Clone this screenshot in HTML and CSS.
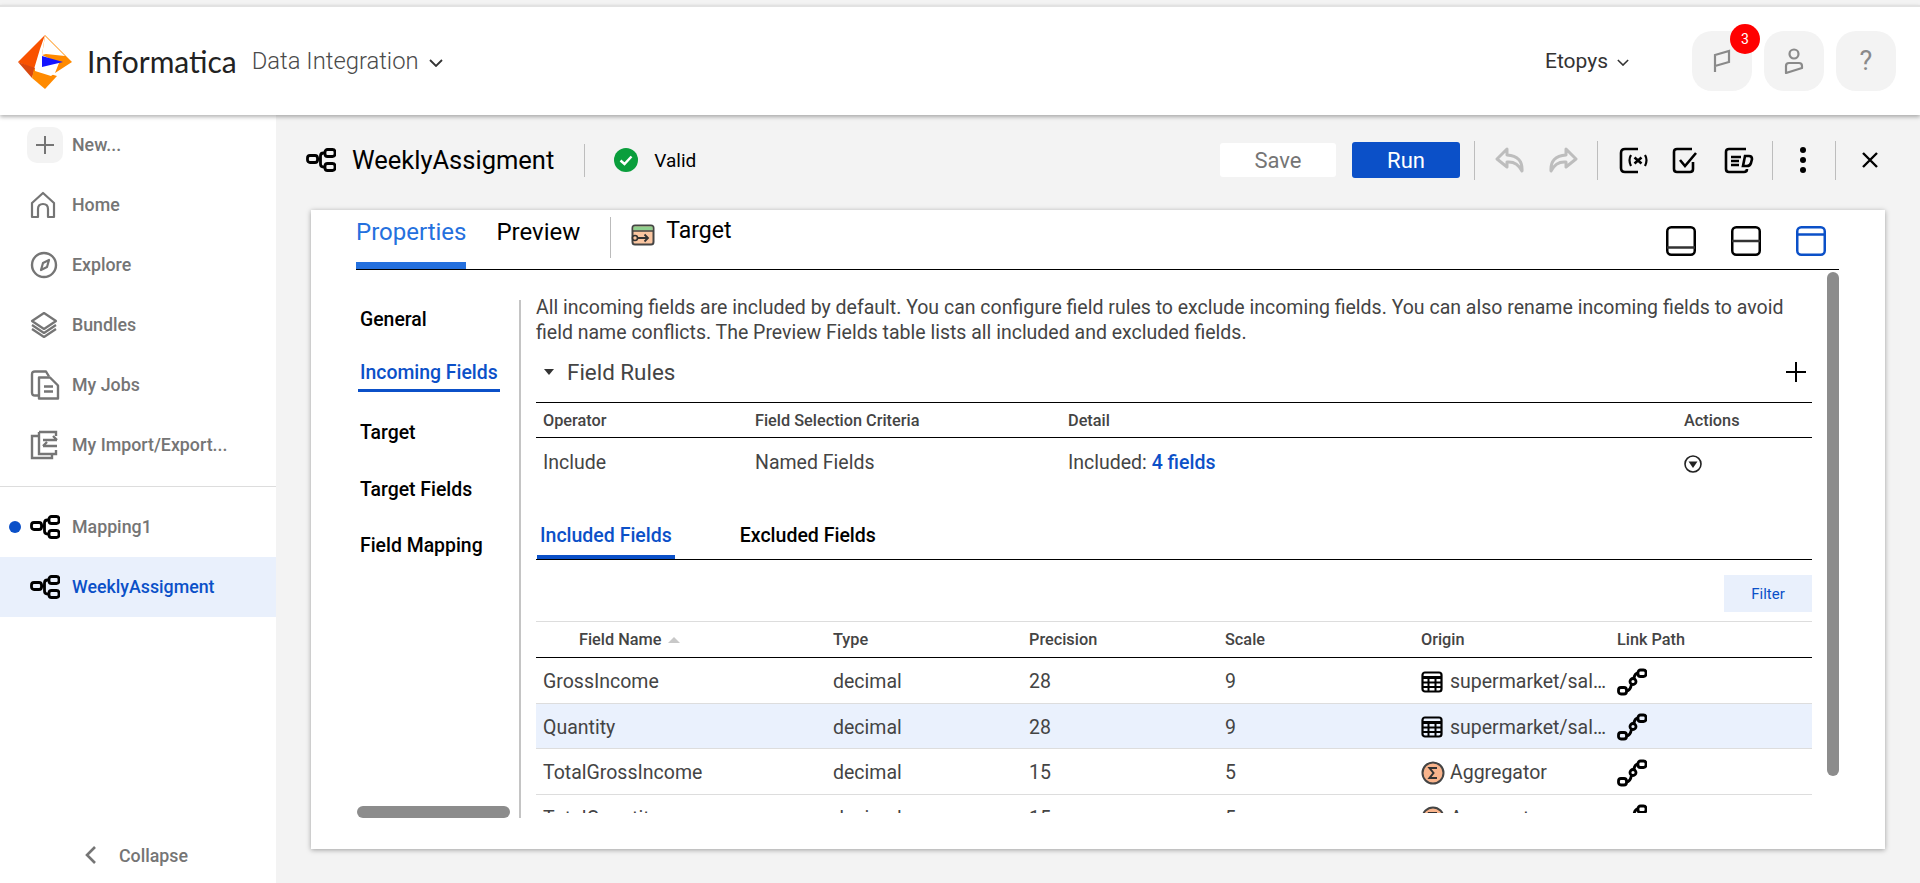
FILE: index.html
```html
<!DOCTYPE html>
<html lang="en">

    <head>
        <meta charset="UTF-8">
        <title>WeeklyAssigment - Data Integration</title>
        <link rel="stylesheet" href="styles.css">
    </head>

    <body>
        <!-- shared icons -->
        <svg class="defs" width="0" height="0">
            <symbol id="i-map" viewBox="0 0 30 24">
                <g fill="none" stroke="currentColor" stroke-width="2.800">
                    <rect x="1.500" y="7.500" width="10" height="7" rx="2.500"/>
                    <rect x="19" y="1.500" width="10" height="7" rx="2.500"/>
                    <rect x="19" y="15.500" width="10" height="7" rx="2.500"/>
                    <path d="M11.500 11h3M19 5h-1.500q-3 0-3 3v8q0 3 3 3h1.500"/>
                </g>
            </symbol>
            <symbol id="i-link" viewBox="0 0 30 28">
                <g fill="none" stroke="#000" stroke-width="2.800">
                    <rect x="1.500" y="19.500" width="8" height="6.500" rx="2.500"/>
                    <rect x="21" y="2" width="8" height="6.500" rx="2.500"/>
                    <circle cx="16" cy="13.500" r="3"/>
                    <path d="M9.500 23q4-.5 5-7M17 10.500q.5-5 4-5.500"/>
                </g>
            </symbol>
            <symbol id="i-grid" viewBox="0 0 22 22">
                <rect x="1.500" y="1.500" width="19" height="19" rx="2.500" fill="none" stroke="#000" stroke-width="2.200"/>
                <path d="M1.500 6.500h19" stroke="#000" stroke-width="3"/>
                <path d="M1.500 11.500h19M1.500 16h19M7.500 6v14M14.500 6v14" stroke="#000" stroke-width="2"/>
            </symbol>
            <symbol id="i-sum" viewBox="0 0 24 24">
                <circle cx="12" cy="12" r="10.500" fill="#f9b48c" stroke="#444" stroke-width="2"/>
                <path d="M16 7H8.500l4 5-4 5H16" fill="none" stroke="#333" stroke-width="2"/>
            </symbol>
        </svg>

        <header class="topbar">
            <div class="brand">
                <svg class="logo" width="54" height="55" viewBox="0 0 54 55">
                    <polygon points="0,28 27,1 22,15 16,35" fill="#f95200"/>
                    <polygon points="0,28 17,34 14,44" fill="#d9480f"/>
                    <polygon points="27,1 54,28 37,39 41,29 24,21" fill="#ff8a00"/>
                    <polygon points="27,2 47,22 28,20 24,21" fill="#fff"/>
                    <polygon points="16,35 39,42 27,55 14,44" fill="#ff8a00"/>
                    <polygon points="17,33 37,39 33,42 17,37" fill="#fff"/>
                    <polygon points="24,22 45,28 24,33" fill="#1414ff"/>
                </svg>
                <span class="wordmark">Informatica</span>
                <span class="product">Data Integration</span>
                <svg class="chev" width="14" height="8" viewBox="0 0 14 8"><path d="M1 1l6 6 6-6" fill="none" stroke="#333" stroke-width="1.800"/></svg>
            </div>
            <div class="org">
                <span>Etopys</span>
                <svg class="chev" width="12" height="7" viewBox="0 0 14 8"><path d="M1 1l6 6 6-6" fill="none" stroke="#333" stroke-width="1.800"/></svg>
            </div>
            <div class="tools">
                <div class="tool">
                    <svg width="18" height="24" viewBox="0 0 18 24"><path d="M2 23V6l14-4v11L2 17" fill="none" stroke="#8a8a8a" stroke-width="2.200"/></svg>
                    <span class="badge">3</span>
                </div>
                <div class="tool">
                    <svg width="20" height="26" viewBox="0 0 20 26"><g fill="none" stroke="#8a8a8a" stroke-width="2.200" stroke-linejoin="round"><circle cx="10" cy="6" r="4.500"/><path d="M2 25v-7q0-3 3-3h10q3 0 3 3v2z"/></g></svg>
                </div>
                <div class="tool tool-q">?</div>
            </div>
        </header>

        <div class="layout">
            <nav class="side">
                <div class="side-item">
                    <span class="plus">
                        <svg width="20" height="20" viewBox="0 0 20 20"><path d="M10 1v18M1 10h18" stroke="#757575" stroke-width="2"/></svg>
                    </span>
                    <span>New...</span>
                </div>
                <div class="side-item">
                    <svg class="side-icon" width="26" height="28" viewBox="0 0 26 28"><path d="M2 26V12L13 2l11 10v14h-6v-8q0-5-5-5t-5 5v8z" fill="none" stroke="#757575" stroke-width="2.200" stroke-linejoin="round"/></svg>
                    <span>Home</span>
                </div>
                <div class="side-item">
                    <svg class="side-icon" width="28" height="28" viewBox="0 0 28 28"><circle cx="14" cy="14" r="12" fill="none" stroke="#757575" stroke-width="2.400"/><path d="M19 9l-2 7-6 3 2-7z" fill="none" stroke="#757575" stroke-width="2.200" stroke-linejoin="round"/></svg>
                    <span>Explore</span>
                </div>
                <div class="side-item">
                    <svg class="side-icon" width="28" height="28" viewBox="0 0 28 28"><g fill="none" stroke="#757575" stroke-width="2.200" stroke-linejoin="round"><path d="M14 2L2 10l12 8 12-8z"/><path d="M2 14l12 8 12-8"/><path d="M2 18l12 8 12-8"/></g></svg>
                    <span>Bundles</span>
                </div>
                <div class="side-item">
                    <svg class="side-icon" width="30" height="31" viewBox="0 0 30 31"><g fill="none" stroke="#757575" stroke-width="2.400" stroke-linejoin="round"><path d="M8 26H5q-3 0-3-3V5q0-3 3-3h11l3 5"/><path d="M9 8h11l8 8v13H9z"/><path d="M14 17h9M14 22h9"/></g></svg>
                    <span>My Jobs</span>
                </div>
                <div class="side-item">
                    <svg class="side-icon" width="30" height="30" viewBox="0 0 30 30"><g fill="none" stroke="#757575" stroke-width="2.400"><path d="M9 6H2v22h20v-4"/><path d="M9 2h17v4M9 2v22h17v-4"/><path d="M13 10h14M23 6l4 4M27 16H13M17 12l-4 4"/></g></svg>
                    <span>My Import/Export...</span>
                </div>
                <div class="side-sep"></div>
                <div class="side-item side-open">
                    <span class="dot"></span>
                    <svg class="side-icon map" width="30" height="24"><use href="#i-map"/></svg>
                    <span>Mapping1</span>
                </div>
                <div class="side-item side-open side-active">
                    <svg class="side-icon map" width="30" height="24"><use href="#i-map"/></svg>
                    <span>WeeklyAssigment</span>
                </div>
                <div class="collapse">
                    <svg width="12" height="18" viewBox="0 0 12 18"><path d="M10 1L2 9l8 8" fill="none" stroke="#757575" stroke-width="2.600"/></svg>
                    <span>Collapse</span>
                </div>
            </nav>

            <main class="main">
                <div class="titlebar">
                    <svg class="map" width="30" height="24"><use href="#i-map"/></svg>
                    <h1 class="title">WeeklyAssigment</h1>
                    <span class="vline"></span>
                    <span class="status">
                        <svg width="24" height="24" viewBox="0 0 24 24"><circle cx="12" cy="12" r="12" fill="#0a9e3c"/><path d="M6.500 12.500l4 3.500 7-7.500" fill="none" stroke="#fff" stroke-width="2.400"/></svg>
                        <span>Valid</span>
                    </span>
                    <div class="actions">
                        <button class="btn btn-save">Save</button>
                        <button class="btn btn-run">Run</button>
                        <span class="vline vline-a"></span>
                        <svg class="act gap-20" width="30" height="27" viewBox="0 0 30 27"><path d="M12 2L2 12l10 8v-5q10-1 15 9 1-15-15-16z" fill="none" stroke="#bdbdbd" stroke-width="3" stroke-linejoin="round"/></svg>
                        <svg class="act gap-23" width="30" height="27" viewBox="0 0 30 27"><path d="M18 2l10 10-10 8v-5q-10-1-15 9-1-15 15-16z" fill="none" stroke="#bdbdbd" stroke-width="3" stroke-linejoin="round"/></svg>
                        <span class="vline vline-a gap-19"></span>
                        <svg class="act gap-21" width="30" height="27" viewBox="0 0 30 27"><g fill="none" stroke="#000" stroke-width="2.600"><path d="M19 2H6Q2 2 2 6v15q0 4 4 4h13"/><path d="M12 8q-3 5 0 11M26 8q3 5 0 11" stroke-width="2.200"/><path d="M15.500 10.500l7 6M22.500 10.500l-7 6"/></g></svg>
                        <svg class="act gap-23" width="26" height="27" viewBox="0 0 26 27"><g fill="none" stroke="#000" stroke-width="2.600"><path d="M20 2H5Q2 2 2 5v17q0 3 3 3h13q3 0 3-3v-7"/><path d="M8 13l5 6 11-13"/></g></svg>
                        <svg class="act gap-26" width="30" height="27" viewBox="0 0 30 27"><g fill="none" stroke="#000" stroke-width="2.600"><path d="M22 2H5Q2 2 2 5v17q0 3 3 3h15q3 0 3-3"/><path d="M7 10h10M7 14h8M7 18h8"/><path d="M21 9h4q3 0 3 3l-1 4q-1 3-4 3h-4z"/></g></svg>
                        <span class="vline vline-a gap-18"></span>
                        <span class="dots"><i></i><i></i><i></i></span>
                        <span class="vline vline-a gap-0"></span>
                        <svg class="act close" width="18" height="18" viewBox="0 0 18 18"><path d="M2 2l14 14M16 2L2 16" stroke="#000" stroke-width="2.400"/></svg>
                    </div>
                </div>

                <section class="card">
                    <div class="tabs">
                        <span class="tab tab-on">Properties</span>
                        <span class="tab">Preview</span>
                        <span class="tab-sep"></span>
                        <svg class="tgt" width="24" height="22" viewBox="0 0 24 22"><rect x="1.500" y="1.500" width="21" height="19" rx="2.500" fill="#fbc6a1" stroke="#444" stroke-width="2"/><path d="M2.500 2.500h19v4h-19z" fill="#8fd08f"/><path d="M2 7h20" stroke="#444" stroke-width="1.500"/><circle cx="4" cy="14" r="2.500" fill="#fbc6a1" stroke="#333" stroke-width="1.600"/><path d="M6.500 14H17M13.500 10.500L17 14l-3.500 3.500" fill="none" stroke="#333" stroke-width="1.800"/></svg>
                        <span class="tab-target">Target</span>
                        <div class="panes">
                            <svg width="30" height="30" viewBox="0 0 30 30"><rect x="1.250" y="1.250" width="27.500" height="27.500" rx="4" fill="none" stroke="#000" stroke-width="2.500"/><path d="M1 21.500h28" stroke="#333" stroke-width="2.500"/></svg>
                            <svg width="30" height="30" viewBox="0 0 30 30"><rect x="1.250" y="1.250" width="27.500" height="27.500" rx="4" fill="none" stroke="#000" stroke-width="2.500"/><path d="M1 15h28" stroke="#333" stroke-width="2.500"/></svg>
                            <svg width="30" height="30" viewBox="0 0 30 30"><rect x="1.250" y="1.250" width="27.500" height="27.500" rx="4" fill="none" stroke="#0b50c8" stroke-width="2.500"/><path d="M1 8.500h28" stroke="#0b50c8" stroke-width="2.500"/></svg>
                        </div>
                    </div>

                    <div class="props">
                        <ul class="prop-nav">
                            <li>General</li>
                            <li><span class="prop-on">Incoming Fields</span></li>
                            <li>Target</li>
                            <li>Target Fields</li>
                            <li>Field Mapping</li>
                        </ul>

                        <div class="prop-body">
                            <p class="intro">All incoming fields are included by default. You can configure field rules to exclude incoming fields. You can also rename incoming fields to avoid field name conflicts. The Preview Fields table lists all included and excluded fields.</p>

                            <div class="rules-head">
                                <span class="caret"></span>
                                <span class="rules-title">Field Rules</span>
                                <svg class="rules-add" width="22" height="22" viewBox="0 0 22 22"><path d="M11 1v20M1 11h20" stroke="#000" stroke-width="2"/></svg>
                            </div>

                            <div class="rules-row rules-th">
                                <span>Operator</span>
                                <span>Field Selection Criteria</span>
                                <span>Detail</span>
                                <span>Actions</span>
                            </div>
                            <div class="rules-row rules-td">
                                <span>Include</span>
                                <span>Named Fields</span>
                                <span>Included: <a class="link">4 fields</a></span>
                                <span>
                                    <svg class="rules-act" width="18" height="18" viewBox="0 0 18 18"><circle cx="9" cy="9" r="8" fill="none" stroke="#222" stroke-width="1.600"/><path d="M4.500 6.500h9L9 13z" fill="#222"/></svg>
                                </span>
                            </div>

                            <div class="subtabs">
                                <span class="subtab subtab-on">Included Fields</span>
                                <span class="subtab">Excluded Fields</span>
                            </div>

                            <div class="filter-row">
                                <button class="filter">Filter</button>
                            </div>

                            <div class="grid-head">
                                <span class="fname">Field Name <i class="sort"></i></span>
                                <span>Type</span>
                                <span>Precision</span>
                                <span>Scale</span>
                                <span>Origin</span>
                                <span>Link Path</span>
                            </div>
                            <div class="grid-body">
                                <div class="grid-row">
                                    <span>GrossIncome</span><span>decimal</span><span>28</span><span>9</span>
                                    <span class="origin"><svg width="22" height="22"><use href="#i-grid"/></svg><em>supermarket/sales</em></span>
                                    <svg class="lk" width="30" height="28"><use href="#i-link"/></svg>
                                </div>
                                <div class="grid-row grid-hl">
                                    <span>Quantity</span><span>decimal</span><span>28</span><span>9</span>
                                    <span class="origin"><svg width="22" height="22"><use href="#i-grid"/></svg><em>supermarket/sales</em></span>
                                    <svg class="lk" width="30" height="28"><use href="#i-link"/></svg>
                                </div>
                                <div class="grid-row">
                                    <span>TotalGrossIncome</span><span>decimal</span><span>15</span><span>5</span>
                                    <span class="origin origin-sum"><svg width="24" height="24"><use href="#i-sum"/></svg><em>Aggregator</em></span>
                                    <svg class="lk" width="30" height="28"><use href="#i-link"/></svg>
                                </div>
                                <div class="grid-row">
                                    <span>TotalQuantity</span><span>decimal</span><span>15</span><span>5</span>
                                    <span class="origin origin-sum"><svg width="24" height="24"><use href="#i-sum"/></svg><em>Aggregator</em></span>
                                    <svg class="lk" width="30" height="28"><use href="#i-link"/></svg>
                                </div>
                            </div>
                        </div>
                    </div>

                    <!-- scrollbars lie over the content -->
                    <span class="bar-v"></span>
                    <span class="bar-h"></span>
                </section>
            </main>
        </div>
    </body>

</html>
```

FILE: styles.css
```css
* {
    margin: 0;
    padding: 0;
    box-sizing: border-box;
    list-style: none;
}

html,
body {
    height: 883px;
    overflow: hidden;
}

body {
    display: flex;
    flex-direction: column;
    background: #f3f3f3;
    font-family: Roboto, "Liberation Sans", sans-serif;
    color: #000;
}

.defs {
    display: block;
    height: 0;
}

button {
    border: 0;
    font-family: inherit;
}

/* top bar */
.topbar {
    position: relative;
    z-index: 2;
    flex: none;
    height: 110px;
    margin-top: 5px;
    display: flex;
    align-items: center;
    padding: 0 24px 0 18px;
    background: #fff;
    border-top: 2px solid #e2e2e2;
    box-shadow: 0 2px 4px rgba(0, 0, 0, 0.3);
}

.brand {
    display: flex;
    align-items: center;
}

.wordmark {
    margin-left: 15px;
    font-family: Lato, Roboto, sans-serif;
    font-size: 30px;
    color: #222;
}

.product {
    margin-left: 15px;
    font-size: 23.800px;
    font-weight: 300;
    color: #4a4a4a;
}

.brand .chev {
    margin-left: 10px;
    margin-top: 3px;
}

.org {
    margin-left: auto;
    display: flex;
    align-items: center;
    gap: 9px;
    font-size: 21px;
    color: #333;
}

.org .chev {
    margin-top: 2px;
}

.tools {
    display: flex;
    gap: 12px;
    margin-left: 63px;
}

.tool {
    position: relative;
    width: 60px;
    height: 60px;
    display: flex;
    align-items: center;
    justify-content: center;
    border-radius: 20px;
    background: #f3f3f3;
}

.tool-q {
    font-size: 27px;
    color: #8a8a8a;
}

.badge {
    position: absolute;
    top: -7px;
    right: -8px;
    width: 30px;
    height: 30px;
    border-radius: 50%;
    background: #f00;
    color: #fff;
    font-size: 14px;
    line-height: 30px;
    text-align: center;
}

.layout {
    flex: 1;
    display: flex;
    min-height: 0;
}

/* left menu */
.side {
    flex: none;
    width: 276px;
    display: flex;
    flex-direction: column;
    background: #fff;
}

.side-item {
    height: 60px;
    display: flex;
    align-items: center;
    padding: 0 0 2px 72px;
    position: relative;
    font-size: 17.800px;
    font-weight: 500;
    color: #757575;
}

.plus {
    position: absolute;
    left: 27px;
    top: 12px;
    width: 36px;
    height: 36px;
    display: flex;
    align-items: center;
    justify-content: center;
    border-radius: 10px;
    background: #f3f3f3;
}

.side-icon {
    position: absolute;
    left: 30px;
    top: 50%;
    transform: translateY(-50%);
}

.map {
    color: #000;
}

.side-sep {
    height: 1px;
    margin: 11px 0 10px;
    background: #ddd;
}

.side-active {
    background: #e9f0fc;
    color: #0b50c8;
}

.dot {
    position: absolute;
    left: 9px;
    top: 24px;
    width: 12px;
    height: 12px;
    border-radius: 50%;
    background: #0b50c8;
}

.collapse {
    margin-top: auto;
    height: 56px;
    display: flex;
    align-items: center;
    padding-left: 85px;
    gap: 22px;
    font-size: 17.800px;
    font-weight: 500;
    color: #757575;
}

/* work area */
.main {
    flex: 1;
    min-width: 0;
    display: flex;
    flex-direction: column;
    padding: 0 35px 34px;
}

.titlebar {
    flex: none;
    height: 95px;
    display: flex;
    align-items: center;
    padding-bottom: 5px;
    margin-left: -5px;
}

.title {
    margin-left: 16px;
    font-size: 25.500px;
    font-weight: 400;
}

.vline {
    width: 1px;
    height: 33px;
    margin-left: 30px;
    background: #bdbdbd;
}

.status {
    display: flex;
    align-items: center;
    gap: 16px;
    margin-left: 29px;
    font-size: 19px;
}

.actions {
    margin-left: auto;
    display: flex;
    align-items: center;
    margin-right: 6px;
}

.btn {
    height: 34px;
    border-radius: 3px;
    font-size: 22px;
}

.btn-save {
    width: 116px;
    background: #fff;
    color: #757575;
}

.btn-run {
    width: 108px;
    height: 36px;
    margin-left: 16px;
    background: #0b50c8;
    color: #fff;
}

.vline-a {
    height: 39px;
    margin-left: 14px;
}

.gap-0 {
    margin-left: 0;
}

.gap-18 {
    margin-left: 18px;
}

.gap-19 {
    margin-left: 19px;
}

.gap-20 {
    margin-left: 20px;
}

.gap-21 {
    margin-left: 21px;
}

.gap-23 {
    margin-left: 23px;
}

.gap-26 {
    margin-left: 26px;
}

.dots {
    display: flex;
    flex-direction: column;
    gap: 4px;
    margin: 0 29px 0 27px;
}

.dots i {
    width: 6px;
    height: 6px;
    border-radius: 50%;
    background: #000;
}

.close {
    margin-left: 25px;
}

.card {
    position: relative;
    flex: 1;
    min-height: 0;
    display: flex;
    flex-direction: column;
    padding: 0 46px 31px 45px;
    background: #fff;
    box-shadow: 0 1px 5px rgba(0, 0, 0, 0.35);
}

.tabs {
    flex: none;
    height: 60px;
    display: flex;
    border-bottom: 1px solid #000;
}

.tab {
    height: 59px;
    padding-top: 7px;
    margin-right: 30px;
    font-size: 24px;
    line-height: 30px;
}

.tab-on {
    border-bottom: 7px solid #2470de;
    color: #2470de;
}

.tab-sep {
    width: 1px;
    height: 41px;
    margin-top: 7px;
    background: #bbb;
}

.tgt {
    margin: 14px 0 0 20px;
}

.tab-target {
    margin-left: 11px;
    padding-top: 6px;
    font-size: 23px;
    line-height: 30px;
}

.panes {
    margin-left: auto;
    display: flex;
    gap: 35px;
    padding: 16px 13px 0 0;
}

.props {
    flex: 1;
    min-height: 0;
    display: flex;
}

.prop-nav {
    flex: none;
    width: 165px;
    margin-top: 30px;
    padding-left: 2px;
    display: flex;
    flex-direction: column;
    gap: 18.500px;
    border-right: 2px solid #c4c4c4;
    font-size: 19.400px;
    font-weight: 500;
}

.prop-nav li {
    height: 38px;
    line-height: 40px;
    padding-left: 2px;
}

.prop-on {
    display: inline-block;
    height: 35px;
    margin-left: -2px;
    padding: 0 2px;
    line-height: 31px;
    border-bottom: 3px solid #0b50c8;
    color: #0b50c8;
    vertical-align: top;
}

.prop-body {
    flex: 1;
    min-width: 0;
    margin-left: 15px;
    margin-right: 27px;
    padding-top: 25px;
    font-size: 19.500px;
    color: #444;
}

.intro {
    line-height: 25px;
}

.rules-head {
    height: 30px;
    margin-top: 12px;
    display: flex;
    align-items: center;
}

.caret {
    width: 0;
    height: 0;
    margin-left: 8px;
    border: 5.500px solid transparent;
    border-top: 6px solid #333;
    border-bottom: 0;
}

.rules-title {
    margin-left: 13px;
    font-size: 22.400px;
}

.rules-add {
    margin-left: auto;
    margin-right: 5px;
}

.rules-row {
    display: grid;
    grid-template-columns: 212px 313px 616px 1fr;
    align-items: center;
    padding-left: 7px;
}

.rules-th {
    height: 36px;
    margin-top: 15px;
    border-top: 1.500px solid #000;
    border-bottom: 1.500px solid #000;
    font-size: 16.300px;
    font-weight: 500;
}

.rules-td {
    height: 50px;
    padding-bottom: 2px;
}

.rules-act {
    display: block;
    margin: 3px 0 0 0;
}

.link {
    color: #0b50c8;
    font-weight: 500;
}

.subtabs {
    height: 72px;
    padding-left: 1px;
    display: flex;
    align-items: flex-end;
    border-bottom: 1.500px solid #000;
}

.subtab {
    height: 41px;
    margin-right: 62px;
    padding: 6px 3px 0;
    font-weight: 500;
    color: #000;
}

.subtab-on {
    border-bottom: 4px solid #0b50c8;
    color: #0b50c8;
}

.filter-row {
    display: flex;
    justify-content: flex-end;
    margin-top: 15px;
}

.filter {
    width: 88px;
    height: 37px;
    background: #e9f0fc;
    color: #0b50c8;
    font-size: 15px;
}

.grid-head,
.grid-row {
    display: grid;
    grid-template-columns: 297px 196px 196px 196px 196px 1fr;
    align-items: center;
}

.grid-head {
    height: 37px;
    margin-top: 9px;
    border-top: 1px solid #ddd;
    border-bottom: 1.500px solid #000;
    font-size: 16.300px;
    font-weight: 500;
}

.fname {
    padding-left: 43px;
}

.sort {
    display: inline-block;
    margin: 0 0 2px 2px;
    border: 6px solid transparent;
    border-top: 0;
    border-bottom: 6px solid #c8c8c8;
}

.grid-body {
    height: 155px;
    overflow: hidden;
}

.grid-row {
    height: 45.500px;
    padding-top: 3px;
    border-bottom: 1px solid #ddd;
}

.grid-row > span:first-child {
    padding-left: 7px;
}

.grid-hl {
    background: #eaf1fd;
}

.origin {
    display: flex;
    align-items: center;
    gap: 7px;
    width: 186px;
}

.origin-sum {
    gap: 5px;
}

.origin em {
    flex: 1;
    min-width: 0;
    overflow: hidden;
    white-space: nowrap;
    text-overflow: ellipsis;
    font-style: normal;
}

.lk {
    display: block;
}

.bar-v {
    position: absolute;
    left: 1516px;
    top: 62px;
    width: 12px;
    height: 504px;
    border-radius: 6px;
    background: #8c8c8c;
}

.bar-h {
    position: absolute;
    left: 46px;
    bottom: 31px;
    width: 153px;
    height: 12px;
    border-radius: 6px;
    background: #8c8c8c;
}
```
